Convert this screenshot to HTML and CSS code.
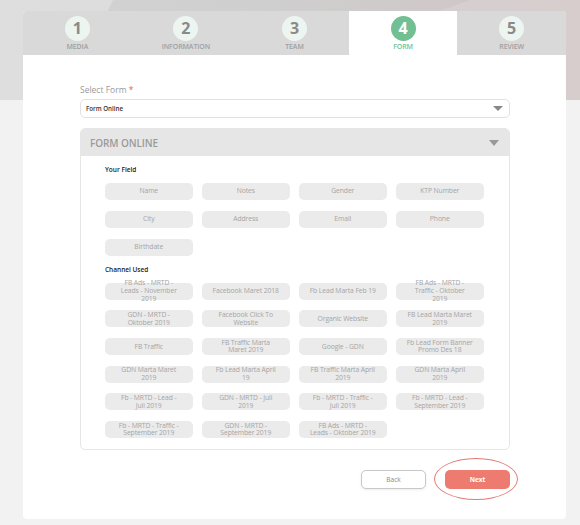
FILE: index.html
```html
<!DOCTYPE html>
<html>
<head>
<meta charset="utf-8">
<link rel="stylesheet" href="styles.css">
</head>
<body>
<div class="hero"></div>
<div class="card">
  <div class="steps">
    <div class="step"><span class="num">1</span><span class="lbl">MEDIA</span></div>
    <div class="step"><span class="num">2</span><span class="lbl">INFORMATION</span></div>
    <div class="step"><span class="num">3</span><span class="lbl">TEAM</span></div>
    <div class="step active"><span class="num">4</span><span class="lbl">FORM</span></div>
    <div class="step"><span class="num">5</span><span class="lbl">REVIEW</span></div>
  </div>
  <div class="body">
    <label class="field-label">Select Form <span class="req">*</span></label>
    <div class="select"><span>Form Online</span><span class="tri"></span></div>
    <div class="panel">
      <div class="panel-head"><span>FORM ONLINE</span><span class="tri big"></span></div>
      <div class="panel-body">
        <div class="sub">Your Field</div>
        <div class="chips">
          <div class="chip">Name</div>
          <div class="chip">Notes</div>
          <div class="chip">Gender</div>
          <div class="chip">KTP Number</div>
          <div class="chip">City</div>
          <div class="chip">Address</div>
          <div class="chip">Email</div>
          <div class="chip">Phone</div>
          <div class="chip">Birthdate</div>
        </div>
        <div class="sub sub2">Channel Used</div>
        <div class="chips tight">
          <div class="chip">FB Ads - MRTD -<br>Leads - November<br>2019</div>
          <div class="chip">Facebook Maret 2018</div>
          <div class="chip">Fb Lead Marta Feb 19</div>
          <div class="chip">FB Ads - MRTD -<br>Traffic - Oktober<br>2019</div>
          <div class="chip">GDN - MRTD -<br>Oktober 2019</div>
          <div class="chip">Facebook Click To<br>Website</div>
          <div class="chip">Organic Website</div>
          <div class="chip">FB Lead Marta Maret<br>2019</div>
          <div class="chip">FB Traffic</div>
          <div class="chip">FB Traffic Marta<br>Maret 2019</div>
          <div class="chip">Google - GDN</div>
          <div class="chip">Fb Lead Form Banner<br>Promo Des 18</div>
          <div class="chip">GDN Marta Maret<br>2019</div>
          <div class="chip">Fb Lead Marta April<br>19</div>
          <div class="chip">FB Traffic Marta April<br>2019</div>
          <div class="chip">GDN Marta April<br>2019</div>
          <div class="chip">Fb - MRTD - Lead -<br>Juli 2019</div>
          <div class="chip">GDN - MRTD - Juli<br>2019</div>
          <div class="chip">Fb - MRTD - Traffic -<br>Juli 2019</div>
          <div class="chip">Fb - MRTD - Lead -<br>September 2019</div>
          <div class="chip">Fb - MRTD - Traffic -<br>September 2019</div>
          <div class="chip">GDN - MRTD -<br>September 2019</div>
          <div class="chip">FB Ads - MRTD -<br>Leads - Oktober 2019</div>
        </div>
      </div>
    </div>
    <div class="actions">
      <button class="btn back">Back</button>
      <div class="next-wrap"><button class="btn next">Next</button></div>
    </div>
  </div>
</div>
</body>
</html>
```

FILE: styles.css
```css
* { box-sizing: border-box; }
html, body { margin: 0; padding: 0; }
body {
  width: 580px;
  height: 525px;
  overflow: hidden;
  background: #f2f2f2;
  font-family: "Open Sans", "Noto Sans", sans-serif;
  position: relative;
}
.hero {
  position: absolute;
  left: 0; top: 0;
  width: 580px; height: 100px;
  background:
    linear-gradient(115deg, rgba(255,255,255,0.25) 0 18%, rgba(255,255,255,0) 18% 100%),
    linear-gradient(160deg, rgba(255,255,255,0) 0 55%, rgba(255,255,255,0.12) 55% 100%),
    linear-gradient(90deg, #d3d3d3 0%, #cfcfcf 45%, #cfc9c9 75%, #d2c6c6 100%);
}
.card {
  position: relative;
  margin: 11px 0 0 23px;
  width: 543px;
  height: 508px;
  background: #fff;
  border-radius: 4px;
  overflow: hidden;
}
.steps {
  display: flex;
  height: 44px;
  background: #d9d9d9;
}
.step {
  flex: 1;
  display: flex;
  flex-direction: column;
  align-items: center;
  padding-top: 5px;
}
.step.active { background: #fff; }
.num {
  width: 25px; height: 25px;
  border-radius: 50%;
  background: #edf5f1;
  color: #8a8a8a;
  font-weight: 700;
  font-size: 16px;
  line-height: 25px;
  text-align: center;
}
.step.active .num { background: #72bf94; color: #fff; }
.lbl {
  margin-top: 1px;
  font-size: 7px;
  font-weight: 600;
  color: #a0a0a0;
  letter-spacing: -0.1px;
}
.step.active .lbl { color: #72bf94; }
.body {
  padding: 29px 56px 0 57px;
}
.field-label {
  display: block;
  font-size: 8.5px;
  color: #9a9a9a;
  margin-bottom: 3px;
  line-height: 12px;
}
.req { color: #e25b5b; }
.select {
  height: 19px;
  border: 1px solid #e2e2e2;
  border-radius: 5px;
  display: flex;
  align-items: center;
  justify-content: space-between;
  padding: 0 6px 0 5px;
  font-size: 6.2px;
  font-weight: 600;
  color: #333;
}
.tri {
  width: 0; height: 0;
  border-left: 5px solid transparent;
  border-right: 5px solid transparent;
  border-top: 5px solid #888;
}
.tri.big {
  border-left-width: 5.5px;
  border-right-width: 5.5px;
  border-top: 6px solid #999;
}
.panel {
  margin-top: 10px;
  border: 1px solid #e6e6e6;
  border-radius: 5px;
  overflow: hidden;
}
.panel-head {
  height: 27px;
  background: #e6e6e6;
  display: flex;
  align-items: center;
  justify-content: space-between;
  padding: 0 10px 0 9px;
  font-size: 10px;
  font-weight: 600;
  color: #9a9a9a;
  letter-spacing: -0.1px;
}
.panel-body {
  padding: 9px 24px 11px 24px;
}
.sub {
  font-size: 6.5px;
  font-weight: 600;
  color: #222;
  line-height: 9px;
  margin-bottom: 8.5px;
}
.sub2 { margin-top: 9.5px; }
.chips {
  display: grid;
  grid-template-columns: repeat(4, 87.5px);
  column-gap: 9.5px;
  row-gap: 11px;
}
.chips.tight { row-gap: 10.7px; }
.chip {
  height: 17px;
  background: #ebebeb;
  border-radius: 5px;
  display: flex;
  align-items: center;
  justify-content: center;
  text-align: center;
  font-size: 6.8px;
  letter-spacing: -0.1px;
  line-height: 7.7px;
  color: #a5a5a5;
  padding: 0 2px;
  white-space: nowrap;
}
.actions {
  display: flex;
  justify-content: flex-end;
  align-items: center;
  margin-top: 20px;
  gap: 19px;
}
.btn {
  width: 65px;
  height: 19px;
  border-radius: 5px;
  font-family: inherit;
  font-size: 6.5px;
  padding: 0;
}
.back {
  background: #fff;
  border: 1px solid #c8c8c8;
  color: #888;
  box-shadow: 0 1px 3px rgba(0,0,0,0.08);
}
.next-wrap { position: relative; }
.next-wrap::before {
  content: "";
  position: absolute;
  left: -11px; top: -12px;
  width: 84px; height: 42px;
  border: 1.5px solid #e37a74;
  border-radius: 50%;
  box-sizing: border-box;
}
.next {
  display: block;
  background: #ee7b6f;
  border: none;
  color: #fff;
  font-weight: 700;
}
```
